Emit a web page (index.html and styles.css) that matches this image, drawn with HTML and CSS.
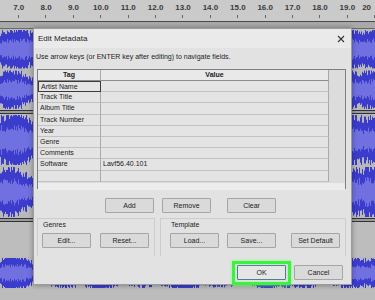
FILE: index.html
```html
<!DOCTYPE html>
<html lang="en">
<head>
    <meta charset="UTF-8">
    <title>Edit Metadata</title>
    <meta name="viewport" content="width=device-width, initial-scale=1.0">
    <link rel="stylesheet" href="styles.css">
</head>
<body>
<div class="screen">
    <div class="ruler">
        <span>7.0</span><span>8.0</span><span>9.0</span><span>10.0</span><span>11.0</span><span>12.0</span><span>13.0</span>
        <span>14.0</span><span>15.0</span><span>16.0</span><span>17.0</span><span>18.0</span><span>19.0</span><span class="last">20</span>
    </div>
    <div class="strip"></div>
    <div class="track t1"><svg class="wave" data-channels="2" data-seed="11"></svg></div>
    <div class="sep"></div>
    <div class="track t2"><svg class="wave" data-channels="2" data-seed="37"></svg></div>
    <div class="sep"></div>
    <div class="gap"></div>
    <div class="track t3"><svg class="wave" data-channels="1" data-seed="73"></svg></div>

    <div class="dialog">
        <div class="titlebar">
            <span>Edit Metadata</span>
            <svg class="close" width="8" height="8" viewBox="0 0 8 8"><path d="M1 1L7 7M7 1L1 7" stroke="#333" stroke-width="1.1"/></svg>
        </div>
        <div class="hint">Use arrow keys (or ENTER key after editing) to navigate fields.</div>

        <div class="grid">
            <div class="row head"><div class="tag">Tag</div><div class="val">Value</div></div>
            <div class="row"><div class="tag focus">Artist Name</div><div class="val"></div></div>
            <div class="row"><div class="tag">Track Title</div><div class="val"></div></div>
            <div class="row"><div class="tag">Album Title</div><div class="val"></div></div>
            <div class="row"><div class="tag">Track Number</div><div class="val"></div></div>
            <div class="row"><div class="tag">Year</div><div class="val"></div></div>
            <div class="row"><div class="tag">Genre</div><div class="val"></div></div>
            <div class="row"><div class="tag">Comments</div><div class="val"></div></div>
            <div class="row"><div class="tag">Software</div><div class="val">Lavf56.40.101</div></div>
            <div class="row"><div class="tag"></div><div class="val"></div></div>
            <div class="hscroll"></div>
        </div>

        <div class="actions">
            <button class="btn">Add</button>
            <button class="btn">Remove</button>
            <button class="btn wide-gap">Clear</button>
        </div>

        <div class="groups">
            <div class="group genres">
                <div class="legend">Genres</div>
                <div class="group-btns">
                    <button class="btn">Edit...</button>
                    <button class="btn">Reset...</button>
                </div>
            </div>
            <div class="group template">
                <div class="legend">Template</div>
                <div class="group-btns">
                    <button class="btn">Load...</button>
                    <button class="btn">Save...</button>
                    <button class="btn push">Set Default</button>
                </div>
            </div>
        </div>

        <div class="footer">
            <button class="btn ok">OK</button>
            <button class="btn">Cancel</button>
        </div>
    </div>
</div>
<script src="wave.js"></script>
</body>
</html>
```

FILE: styles.css
```css
body { margin: 0; font-family: 'Liberation Sans', Arial, sans-serif; color: #222; }
.screen { position: relative; width: 375px; height: 300px; background: #bcbcbc; overflow: hidden; }

/* timeline */
.ruler {
    height: 21px; display: flex; padding-left: 5px; background-color: #cacaca; border-bottom: 1px solid #4c4c4c;
    background-image: repeating-linear-gradient(to right, transparent 0 18px, #666 18px 19px, transparent 19px 27.4px);
    background-size: 100% 3px; background-position: 0 15px; background-repeat: no-repeat;
}
.ruler span { flex: none; width: 27.4px; text-align: center; font-size: 8px; font-weight: bold; color: #3a3a3a; padding-top: 3px; }
.ruler .last { width: 10px; text-align: right; }
.strip { height: 6px; background: #a9a9a9; border-bottom: 1px solid #6a6a6a; }
.track { background: #b9b9b9; }
.t1 { height: 81px; }
.t2 { height: 104px; }
.t3 { height: 32px; margin-top: 2px; }
.sep { height: 4px; background: #9a9a9a; border-top: 1px solid #333; border-bottom: 1px solid #333; box-sizing: border-box; }
.gap { height: 33px; background: #bdbdbd; }
.wave { display: block; width: 100%; height: 100%; }

/* dialog */
.dialog {
    position: absolute; left: 33px; top: 28px; width: 319px; height: 257px; box-sizing: border-box;
    background: #e2e2e2; border: 1px solid #9c9c9c; box-shadow: 0 0 5px rgba(0, 0, 0, 0.35);
    display: flex; flex-direction: column;
}
.titlebar {
    height: 19px; display: flex; align-items: center; justify-content: space-between;
    padding: 0 6px 0 4px; font-size: 8px; background: #eaeaea;
}
.hint { height: 12px; margin-top: 3px; padding-left: 2px; font-size: 7px; line-height: 12px; }

.grid {
    margin: 6px 5px 0 3px; height: 120px; box-sizing: border-box;
    border: 1px solid #7e7e7e; background: #dcdcdc; font-size: 7px;
}
.row { display: flex; height: 11.2px; width: 291px; }
.row div { box-sizing: border-box; border-bottom: 1px solid #c2c2c2; border-right: 1px solid #a9a9a9; padding-left: 2px; line-height: 10px; background: #e4e4e4; }
.row .tag { width: 63px; }
.row .val { width: 228px; }
.head { height: 11px; }
.head div { text-align: center; font-weight: bold; padding: 0; background: #e9e9e9; border-bottom-color: #8d8d8d; }
.row .focus { border: 1px solid #3b3b3b; }
.hscroll { height: 7px; width: 100%; background: #ececec; margin-top: 1px; }

.btn {
    font-family: inherit; font-size: 7px; color: #222; height: 15px; width: 49px; padding: 0;
    background: #dadada; border: 1px solid #a5a5a5; border-radius: 1px;
}
.actions { display: flex; justify-content: center; gap: 8px; margin-top: 9px; padding-right: 4px; }
.actions .wide-gap { margin-left: 8px; }

.groups { display: flex; gap: 5px; margin: 5px 5px 0 3px; height: 38px; }
.group { border: 1px solid #cdcdcd; border-bottom: none; padding: 2px 0 0 4px; box-sizing: border-box; }
.genres { width: 118px; }
.template { flex: 1; padding-left: 9px; }
.legend { font-size: 7px; height: 12px; line-height: 8px; padding-left: 1px; }
.group-btns { display: flex; gap: 9px; }
.template .group-btns { gap: 8px; }
.template .push { margin-left: 7px; }

.footer { display: flex; justify-content: flex-end; gap: 8px; margin-top: 9px; padding-right: 8px; }
.ok { position: relative; background: #e6e6e6; border-color: #4d7e99; }
.ok::after {
    content: ''; position: absolute; left: -6px; top: -5px; right: -6px; bottom: -6px;
    border: 3px solid #3cf23c; box-shadow: 0 0 3px #7cff7c, inset 0 0 2px #7cff7c;
}
```

FILE: wave.js
```js
// Draw blue waveforms for the audio tracks behind the dialog
function makeRand(seed) {
    let s = seed;
    return function() {
        s = (s * 16807) % 2147483647;
        return s / 2147483647;
    };
}

document.querySelectorAll('.wave').forEach(svg => {
    const w = svg.clientWidth, h = svg.clientHeight;
    const channels = +svg.dataset.channels;
    const rand = makeRand(+svg.dataset.seed);
    const half = h / channels / 2;
    let outer = '', inner = '';
    for (let c = 0; c < channels; c++) {
        const mid = half * (2 * c + 1);
        for (let x = 0; x < w; x++) {
            const env = 0.65 + 0.3 * Math.sin(x / 9 + c) * Math.sin(x / 23);
            const a = Math.min(half - 1, half * (env + rand() * 0.35));
            const b = a * (0.35 + rand() * 0.25);
            outer += `M${x + 0.5} ${(mid - a).toFixed(1)}V${(mid + a).toFixed(1)}`;
            inner += `M${x + 0.5} ${(mid - b).toFixed(1)}V${(mid + b).toFixed(1)}`;
        }
    }
    svg.innerHTML = `<path d="${outer}" stroke="#3b3bcc" stroke-width="1"/>` +
                    `<path d="${inner}" stroke="#7070e0" stroke-width="1"/>`;
});
```
